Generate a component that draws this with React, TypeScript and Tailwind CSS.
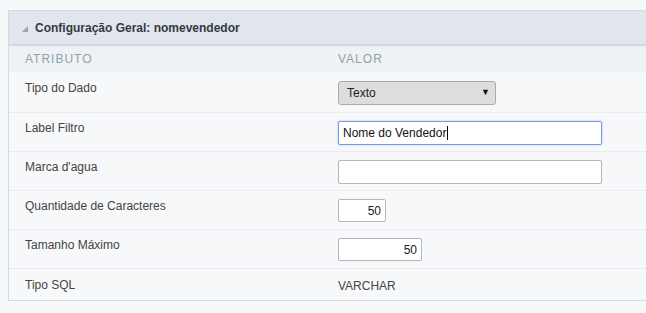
import React from "react";

type Row = { label: string; kind: "select" | "text" | "num" | "plain"; value: string; width?: string; focused?: boolean };

const ROWS: Row[] = [
  { label: "Tipo do Dado", kind: "select", value: "Texto" },
  { label: "Label Filtro", kind: "text", value: "Nome do Vendedor", focused: true },
  { label: "Marca d'agua", kind: "text", value: "" },
  { label: "Quantidade de Caracteres", kind: "num", value: "50", width: "w-[48px]" },
  { label: "Tamanho Máximo", kind: "num", value: "50", width: "w-[84px]" },
  { label: "Tipo SQL", kind: "plain", value: "VARCHAR" },
];

function Field({ row }: { row: Row }) {
  if (row.kind === "select") {
    return (
      <div className="flex h-[24px] w-[158px] items-center justify-between rounded-[3px] border border-[#a9a9a9] bg-[#dddddd] pl-[8px] pr-[5px] text-[12px] text-[#222]">
        <span>{row.value}</span>
        <span className="text-[9px] text-[#111]">▼</span>
      </div>
    );
  }
  if (row.kind === "plain") {
    return <div className="-mt-[1px] text-[12px] text-[#444]">{row.value}</div>;
  }
  if (row.kind === "num") {
    return (
      <div
        className={`flex h-[23px] ${row.width} items-center justify-end rounded-[2px] border border-[#b5b5bd] bg-white pr-[4px] text-[12px] text-[#222]`}
      >
        {row.value}
      </div>
    );
  }
  return (
    <div
      className={`flex h-[24px] w-[264px] items-center rounded-[2px] border bg-white pl-[4px] text-[12px] text-[#111] ${
        row.focused ? "border-[#7b9be0] shadow-[0_0_2px_#9fb7ee]" : "border-[#b5b5bd]"
      }`}
    >
      {row.value}
      {row.focused && <span className="ml-[1px] h-[14px] w-px bg-black" />}
    </div>
  );
}

export default function App() {
  return (
    <div className="min-h-[313px] bg-[#f7f8fa] pl-[8px] pt-[10px] font-['Liberation_Sans',Arimo,Arial,sans-serif]">
      <div className="border-b border-l border-t border-[#d3dae0]">
        {/* Panel header */}
        <div className="flex h-[35px] items-center gap-[7px] border-b-2 border-[#d2d9df] bg-[#e1e5ec] pl-[13px]">
          <span className="mt-[2px] h-0 w-0 border-b-[6px] border-l-[6px] border-b-[#9aa3ad] border-l-transparent" />
          <span className="text-[12px] font-bold text-[#333a42]">Configuração Geral: nomevendedor</span>
        </div>

        {/* Column header */}
        <div className="flex h-[26px] items-center bg-[#eff2f5] text-[12px] tracking-[1px] text-[#8ea2ae]">
          <div className="w-[329px] pl-[16px]">ATRIBUTO</div>
          <div>VALOR</div>
        </div>

        {ROWS.map((row, i) => (
          <div
            key={row.label}
            className={`flex ${i === ROWS.length - 1 ? "h-[32px] pt-[9px]" : "h-[39px] pt-[8px]"} ${
              i > 0 ? "border-t border-[#e8ebef]" : "h-[40px] pt-[9px]"
            }`}
          >
            <div className="-mt-[2px] w-[329px] pl-[16px] text-[12px] text-[#444]">{row.label}</div>
            <Field row={row} />
          </div>
        ))}
      </div>
    </div>
  );
}
